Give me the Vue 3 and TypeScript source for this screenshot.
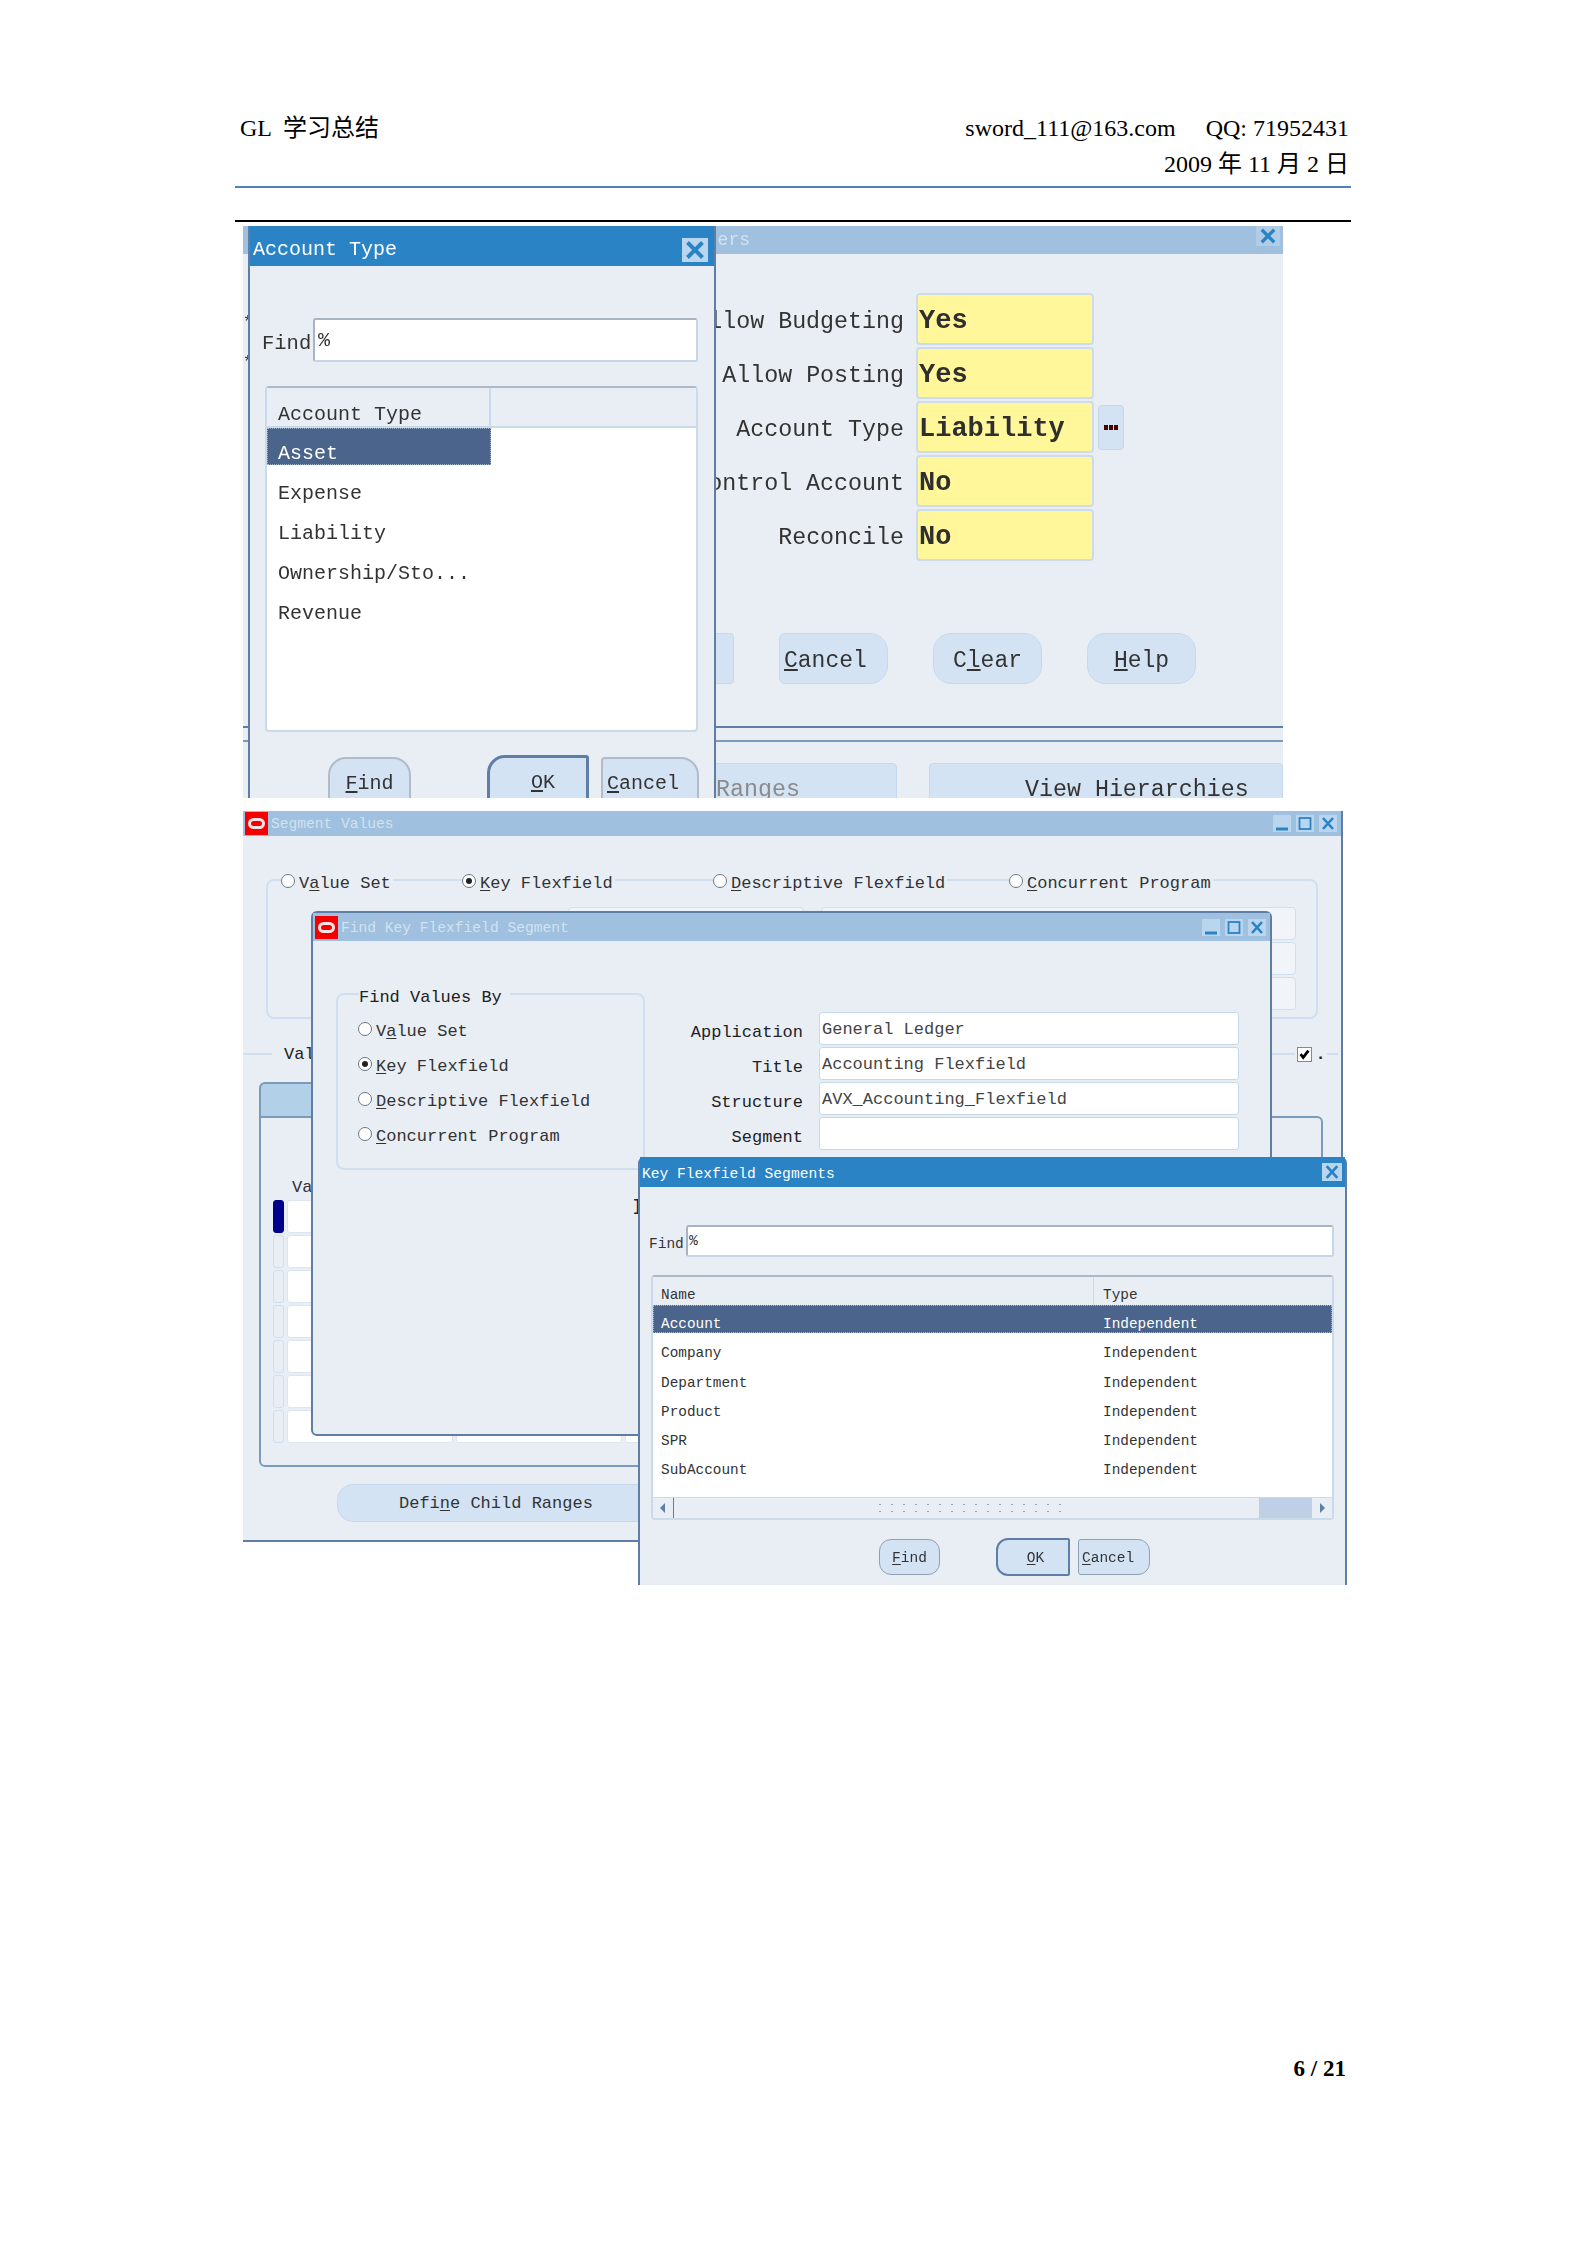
<script setup lang="ts">
interface FormRow { label: string; value: string }
const yellowRows: FormRow[] = [
  { label: 'Allow Budgeting', value: 'Yes' },
  { label: 'Allow Posting', value: 'Yes' },
  { label: 'Account Type', value: 'Liability' },
  { label: 'Control Account', value: 'No' },
  { label: 'Reconcile', value: 'No' },
]
const accountTypes: string[] = ['Asset', 'Expense', 'Liability', 'Ownership/Sto...', 'Revenue']
const findRadios = [
  { pre: 'V', mn: 'a', post: 'lue Set', on: false },
  { pre: '', mn: 'K', post: 'ey Flexfield', on: true },
  { pre: '', mn: 'D', post: 'escriptive Flexfield', on: false },
  { pre: '', mn: 'C', post: 'oncurrent Program', on: false },
]
const findFields: FormRow[] = [
  { label: 'Application', value: 'General Ledger' },
  { label: 'Title', value: 'Accounting Flexfield' },
  { label: 'Structure', value: 'AVX_Accounting_Flexfield' },
  { label: 'Segment', value: '' },
]
const segments: string[] = ['Account', 'Company', 'Department', 'Product', 'SPR', 'SubAccount']
const tableRows: number[] = [0, 1, 2, 3, 4, 5, 6]
const fieldRows: number[] = [0, 1, 2]
</script>

<template>
  <div class="page">
    <header class="head">
      <div class="head-left">GL 学习总结</div>
      <div class="head-right">
        <div>sword_111@163.com &nbsp;&nbsp;&nbsp; QQ: 71952431</div>
        <div>2009 年 11 月 2 日</div>
      </div>
    </header>
    <div class="rule-blue"></div>
    <div class="rule-black"></div>

    <section class="fig fig-a">
      <div class="back">
        <div class="bar bar-back">
          <span class="bar-title back-title">Parameters</span>
          <span class="wbtn back-close"><svg viewBox="0 0 16 16"><path d="M3 3l10 10M13 3L3 13" /></svg></span>
        </div>
        <div class="yellow-form">
          <div v-for="r in yellowRows" :key="r.label" class="yrow">
            <span class="ylabel">{{ r.label }}</span>
            <span class="yfield">{{ r.value }}</span>
            <span v-if="r.value === 'Liability'" class="more"><i></i><i></i><i></i></span>
          </div>
        </div>
        <div class="back-btns">
          <span class="bbtn stub"></span>
          <span class="bbtn left"><u>C</u>ancel</span>
          <span class="bbtn round">C<u>l</u>ear</span>
          <span class="bbtn round"><u>H</u>elp</span>
        </div>
        <div class="line-a"></div>
        <div class="line-b"></div>
        <div class="tab-btns">
          <span class="tab ranges">Ranges</span>
          <span class="tab view">View Hierarchies</span>
        </div>
      </div>
      <span class="edge-mark em1">*</span>
      <span class="edge-mark em2">*</span>

      <div class="dlg dlg-a">
        <div class="bar bar-front bar-a">
          <span class="bar-title a-title">Account Type</span>
          <span class="wbtn a-close"><svg viewBox="0 0 16 16"><path d="M3 3l10 10M13 3L3 13" /></svg></span>
        </div>
        <div class="a-find">
          <span class="a-find-label">Find</span>
          <span class="a-find-input">%</span>
        </div>
        <div class="a-list">
          <div class="a-head"><span class="a-head-cell">Account Type</span></div>
          <div class="a-rows">
            <div v-for="(t, i) in accountTypes" :key="t" class="a-row" :class="{ sel: i === 0 }">{{ t }}</div>
          </div>
        </div>
        <div class="a-btns">
          <span class="abtn a-b1"><u>F</u>ind</span>
          <span class="abtn a-b2"><u>O</u>K</span>
          <span class="abtn a-b3"><u>C</u>ancel</span>
        </div>
      </div>
    </section>

    <section class="fig fig-b">
      <div class="seg">
        <div class="bar bar-back seg-bar">
          <span class="logo"><i></i></span>
          <span class="bar-title small-title">Segment Values</span>
          <span class="wbtns">
            <span class="wbtn mini"><svg viewBox="0 0 18 17"><path d="M3 14h12" class="thick" /></svg></span>
            <span class="wbtn mini"><svg viewBox="0 0 18 17"><rect x="3.5" y="3" width="11" height="11" /></svg></span>
            <span class="wbtn mini"><svg viewBox="0 0 18 17"><path d="M4 3l10 11M14 3L4 14" /></svg></span>
          </span>
        </div>
        <div class="seg-frame">
          <div class="legend">
            <label v-for="o in findRadios" :key="o.post" class="radio legend-radio">
              <span class="dot" :class="{ on: o.on }"></span>
              <span>{{ o.pre }}<u>{{ o.mn }}</u>{{ o.post }}</span>
            </label>
          </div>
          <div class="seg-fields">
            <div class="seg-col seg-col-l"><span v-for="n in fieldRows" :key="n" class="seg-cell"></span></div>
            <div class="seg-col seg-col-r"><span v-for="n in fieldRows" :key="n" class="seg-cell"></span></div>
          </div>
        </div>
        <div class="val-row">
          <span class="val-line short"></span>
          <span class="val-text">Values</span>
          <span class="val-line grow"></span>
          <span class="check"><svg viewBox="0 0 15 15"><path d="M3 7l3 4 6-8" /></svg></span>
          <span class="val-dot">.</span>
          <span class="val-line end"></span>
        </div>
        <div class="panel-tab"></div>
        <div class="panel">
          <div class="panel-label">Value</div>
          <div v-for="n in tableRows" :key="n" class="t-row">
            <span class="t-ind" :class="{ cur: n === 0 }"></span>
            <span class="t-cell"></span>
            <span class="t-cell"></span>
            <span class="t-cell wide"></span>
          </div>
        </div>
        <div class="child-btn">Defi<u>n</u>e Child Ranges</div>
      </div>

      <div class="findwin">
        <div class="bar bar-back find-bar">
          <span class="logo"><i></i></span>
          <span class="bar-title small-title find-title">Find Key Flexfield Segment</span>
          <span class="wbtns">
            <span class="wbtn mini"><svg viewBox="0 0 18 17"><path d="M3 14h12" class="thick" /></svg></span>
            <span class="wbtn mini"><svg viewBox="0 0 18 17"><rect x="3.5" y="3" width="11" height="11" /></svg></span>
            <span class="wbtn mini"><svg viewBox="0 0 18 17"><path d="M4 3l10 11M14 3L4 14" /></svg></span>
          </span>
        </div>
        <div class="find-body">
          <div class="group">
            <div class="group-title">Find Values By</div>
            <label v-for="o in findRadios" :key="o.post" class="radio group-radio">
              <span class="dot" :class="{ on: o.on }"></span>
              <span>{{ o.pre }}<u>{{ o.mn }}</u>{{ o.post }}</span>
            </label>
          </div>
          <div class="find-form">
            <div v-for="f in findFields" :key="f.label" class="ff-row">
              <span class="ff-label">{{ f.label }}</span>
              <span class="ff-field">{{ f.value }}</span>
            </div>
          </div>
        </div>
        <span class="stray">]</span>
      </div>

      <div class="dlg dlg-k">
        <div class="bar bar-front bar-k">
          <span class="bar-title small-title white">Key Flexfield Segments</span>
          <span class="wbtn k-close"><svg viewBox="0 0 18 17"><path d="M4 3l10 11M14 3L4 14" /></svg></span>
        </div>
        <div class="k-find">
          <span class="k-find-label">Find</span>
          <span class="k-find-input">%</span>
        </div>
        <div class="k-list">
          <div class="k-head">
            <span class="k-c1 k-h1">Name</span>
            <span class="k-c2">Type</span>
          </div>
          <div v-for="(s, i) in segments" :key="s" class="k-row" :class="{ sel: i === 0 }">
            <span class="k-c1">{{ s }}</span>
            <span class="k-c2">Independent</span>
          </div>
          <div class="k-scroll">
            <span class="sb-arrow"><svg viewBox="0 0 8 14"><path d="M6 2v10L1 7z" /></svg></span>
            <span class="sb-track"><span class="sb-grip"></span></span>
            <span class="sb-rest"></span>
            <span class="sb-arrow right"><svg viewBox="0 0 8 14"><path d="M2 2v10l5-5z" /></svg></span>
          </div>
        </div>
        <div class="k-btns">
          <span class="kbtn k-b1"><u>F</u>ind</span>
          <span class="kbtn k-b2"><u>O</u>K</span>
          <span class="kbtn k-b3"><u>C</u>ancel</span>
        </div>
      </div>
    </section>

    <footer class="foot">6 / 21</footer>
  </div>
</template>

<style>
html, body { margin: 0; background: #fff; }
</style>

<style scoped>
.page {
  width: 1586px;
  height: 2244px;
  box-sizing: border-box;
  padding-top: 110px;
  overflow: hidden;
  background: #fff;
  color: #000;
  font-family: "Liberation Serif", "Noto Sans CJK SC", serif;
  font-size: 24px;
}
.head {
  display: flex;
  justify-content: space-between;
  margin: 0 237px 0 240px;
  line-height: 36px;
  height: 72px;
}
.head-left { word-spacing: 6px; }
.head-right { text-align: right; }
.rule-blue { margin: 4px 235px 0; height: 2px; background: #4f81bd; }
.rule-black { margin: 32px 235px 0; height: 2px; background: #000; }

.fig {
  position: relative;
  overflow: hidden;
  font-family: "Liberation Mono", "DejaVu Sans Mono", monospace;
  color: #333;
  filter: blur(0.35px);
}
.fig-a { margin: 4px 0 0 243px; width: 1040px; height: 572px; }
.fig-b { margin: 13px 0 0 243px; width: 1108px; height: 774px; }

u { text-underline-offset: 2px; }

.bar { display: flex; align-items: center; box-sizing: border-box; }
.bar-back { background: #9fc0de; }
.bar-front { background: #2a83c5; }
.bar-title { white-space: nowrap; }
.wbtn { display: flex; background: #b9d6ee; flex: none; }
.wbtn svg { width: 100%; height: 100%; fill: none; stroke: #2a83c5; stroke-width: 2.6; }
.wbtn rect { stroke-width: 1.8; }
.wbtn .thick { stroke-width: 3; }

/* figure A, window behind */
.back { width: 1040px; height: 572px; background: #e9eef5; }
.bar-back.bar { height: 28px; }
.back-title { margin-left: 399px; font-size: 18px; color: #d3e2f0; }
.back-close { margin-left: auto; margin-right: 3px; margin-top: -8px; width: 24px; height: 20px; background: #b1cde6; }
.yellow-form { padding-top: 39px; display: flex; flex-direction: column; gap: 2px; }
.yrow { display: flex; align-items: center; height: 52px; }
.ylabel { width: 661px; height: 52px; text-align: right; font-size: 23.3px; line-height: 58px; white-space: nowrap; }
.yfield {
  margin-left: 12px;
  width: 178px;
  height: 52px;
  box-sizing: border-box;
  padding-left: 1px;
  background: #fff79a;
  border: 2px solid #cddcec;
  border-radius: 4px;
  font-size: 27px;
  line-height: 53px;
  font-weight: 700;
  color: #2f2f2f;
}
.more {
  margin-left: 4px;
  width: 26px;
  height: 45px;
  box-sizing: border-box;
  background: #d3e3f3;
  border: 1px solid #c3d6ea;
  border-radius: 4px;
  display: flex;
  align-items: center;
  justify-content: center;
  gap: 1.5px;
}
.more i { width: 3.5px; height: 5px; background: #4a0000; }
.back-btns { display: flex; gap: 45px; margin-top: 72px; padding-left: 440px; }
.bbtn {
  width: 109px;
  height: 51px;
  box-sizing: border-box;
  background: #d3e3f3;
  border: 1px solid #c6d9ec;
  border-radius: 6px 18px 18px 6px;
  font-size: 23px;
  line-height: 55px;
  text-align: center;
}
.bbtn.left { text-align: left; padding-left: 4px; }
.bbtn.round { border-radius: 18px; }
.stub { width: 51px; border-radius: 4px; }
.line-a { margin-top: 42px; height: 2px; background: #5f7ea6; }
.line-b { margin-top: 12px; height: 2px; background: #7c9abc; }
.tab-btns { display: flex; margin-top: 21px; padding-left: 280px; gap: 32px; }
.tab {
  height: 50px;
  box-sizing: border-box;
  background: #d3e3f3;
  border: 1px solid #c6d9ec;
  border-radius: 4px 4px 0 0;
  font-size: 23.3px;
  line-height: 52px;
  white-space: nowrap;
}
.ranges { width: 374px; padding-left: 192px; color: #8a8a8a; }
.view { width: 354px; padding-left: 95px; }
.edge-mark { position: absolute; left: 0; font-size: 16px; line-height: 14px; color: #333; }
.em1 { top: 90px; }
.em2 { top: 130px; }

/* figure A, dialog */
.dlg { position: absolute; box-sizing: border-box; background: #e9eef5; border-left: 2px solid #5f7ea6; border-right: 2px solid #5f7ea6; }
.dlg-a { left: 5px; top: 0; width: 468px; height: 572px; }
.bar-a { height: 40px; }
.a-title { margin-left: 3px; margin-top: 7px; font-size: 20px; color: #fff; }
.a-close { margin-left: auto; margin-right: 6px; margin-top: 8px; width: 26px; height: 24px; }
.a-find { display: flex; padding: 52px 0 0 12px; height: 44px; }
.a-find-label { width: 51px; font-size: 20.5px; line-height: 52px; }
.a-find-input {
  width: 385px;
  box-sizing: border-box;
  background: #fff;
  border: 2px solid #c6d6e8;
  border-top-color: #a9b4c2;
  border-left-color: #a9b4c2;
  border-radius: 3px;
  padding-left: 3px;
  font-size: 20px;
  line-height: 41px;
}
.a-list {
  margin: 24px 0 0 15px;
  width: 433px;
  height: 346px;
  box-sizing: border-box;
  background: #fff;
  border: 2px solid #cbdaea;
  border-top-color: #aeb9c7;
  border-radius: 4px;
}
.a-head { height: 40px; background: #e9eef5; border-bottom: 2px solid #cbdaea; box-sizing: border-box; }
.a-head-cell {
  display: block;
  width: 224px;
  height: 38px;
  box-sizing: border-box;
  padding: 14px 0 0 11px;
  border-right: 2px solid #cbdaea;
  font-size: 20px;
  line-height: 26px;
}
.a-row {
  width: 224px;
  height: 37px;
  margin-bottom: 3px;
  box-sizing: border-box;
  padding: 9px 0 0 11px;
  font-size: 20px;
  line-height: 34px;
  white-space: nowrap;
}
.sel { background: #4a648b; color: #fff; outline: 1px dotted #9fb3cc; outline-offset: -1px; }
.a-btns { display: flex; align-items: flex-start; padding-left: 78px; margin-top: 25px; }
.abtn {
  height: 50px;
  box-sizing: border-box;
  background: #d3e3f3;
  border: 2px solid #b2bcc8;
  font-size: 20px;
  line-height: 50px;
  text-align: center;
}
.a-b1 { width: 83px; border-radius: 18px 18px 0 0; }
.a-b2 { width: 102px; margin: -2px 0 0 76px; height: 52px; padding-left: 10px; border-color: #5f7ea6; border-width: 3px; border-radius: 18px 3px 0 0; }
.a-b3 { width: 98px; margin-left: 12px; padding-left: 4px; text-align: left; border-radius: 4px 18px 0 0; }

/* figure B, segment values */
.seg {
  position: absolute;
  left: 0;
  top: 0;
  width: 1100px;
  height: 731px;
  box-sizing: border-box;
  background: #e9eef5;
  border-right: 2px solid #5f7ea6;
  border-bottom: 2px solid #5f7ea6;
}
.bar-back.seg-bar { height: 25px; padding-right: 4px; }
.logo {
  flex: none;
  width: 23px;
  height: 23px;
  background: #f40000;
  display: flex;
  align-items: center;
  justify-content: center;
  margin-left: 2px;
}
.logo i { width: 17px; height: 11px; box-sizing: border-box; border: 3px solid #f6e3e3; border-radius: 6px; }
.small-title { margin-left: 3px; font-size: 14.6px; color: #d3e2f0; }
.find-title { margin-top: 2px; }
.small-title.white { color: #fff; margin-left: 2px; margin-top: 3px; }
.wbtns { margin-left: auto; display: flex; gap: 5px; }
.mini { width: 18px; height: 17px; }
.seg-frame {
  margin: 43px 0 0 23px;
  width: 1052px;
  height: 140px;
  box-sizing: border-box;
  border: 2px solid #cfdfef;
  border-radius: 8px;
}
.legend {
  display: grid;
  grid-template-columns: 181px 251px 296px auto;
  margin: -8px 0 0 13px;
  height: 20px;
}
.radio { display: flex; align-items: center; font-size: 17px; white-space: nowrap; }
.legend-radio { justify-self: start; background: #e9eef5; padding-right: 2px; }
.dot {
  flex: none;
  box-sizing: border-box;
  width: 14px;
  height: 14px;
  margin: -5px 4px 0 0;
  border-radius: 50%;
  background: #fff;
  border: 1px solid #6b7684;
  display: flex;
  align-items: center;
  justify-content: center;
}
.dot.on::after { content: ""; width: 6px; height: 6px; border-radius: 50%; background: #222; }
.seg-fields { display: flex; gap: 17px; margin: 14px 0 0 300px; }
.seg-col { display: flex; flex-direction: column; gap: 2px; }
.seg-col-l { width: 236px; }
.seg-col-r { width: 475px; }
.seg-cell { height: 33px; box-sizing: border-box; background: #f1f5fa; border: 1px solid #cfdfef; border-radius: 4px; }
.val-row { display: flex; align-items: center; margin-top: 25px; height: 20px; }
.val-line { height: 2px; background: #cfdfef; }
.val-line.short { width: 29px; }
.val-line.grow { flex: 1; }
.val-line.end { width: 11px; margin-right: 3px; }
.val-text { margin: 0 5px 0 12px; font-size: 17px; color: #222; }
.check { flex: none; width: 15px; height: 15px; margin: 0 2px; box-sizing: border-box; background: #fff; border: 1px solid #888; display: flex; }
.check svg { width: 100%; height: 100%; fill: none; stroke: #000; stroke-width: 3.2; }
.val-dot { width: 13px; font-size: 17px; font-weight: 700; text-align: center; color: #222; }
.panel-tab {
  margin: 18px 0 0 16px;
  width: 500px;
  height: 34px;
  box-sizing: border-box;
  background: #b3d0e9;
  border-top: 2px solid #7c9abc;
  border-left: 2px solid #7c9abc;
  border-radius: 6px 0 0 0;
}
.panel {
  margin-left: 16px;
  width: 1064px;
  height: 351px;
  box-sizing: border-box;
  border: 2px solid #7c9abc;
  border-radius: 0 6px 6px 6px;
}
.panel-label { margin: 60px 0 0 31px; height: 22px; font-size: 17px; line-height: 20px; }
.t-row { display: flex; gap: 3px; padding-left: 12px; height: 33px; margin-bottom: 2px; }
.t-ind { width: 11px; box-sizing: border-box; background: #e9eef5; border: 1px solid #cfdfef; border-radius: 3px; }
.t-ind.cur { background: #00008b; border-color: #00008b; }
.t-cell { width: 166px; box-sizing: border-box; background: #fff; border: 1px solid #dbe6f2; border-radius: 3px; }
.t-cell.wide { width: 600px; }
.child-btn {
  margin: 17px 0 0 94px;
  width: 500px;
  height: 38px;
  box-sizing: border-box;
  padding-left: 61px;
  background: #d3e3f3;
  border: 1px solid #c6d9ec;
  border-radius: 16px 0 0 16px;
  font-size: 17px;
  line-height: 38px;
}

/* figure B, find window */
.findwin {
  position: absolute;
  left: 68px;
  top: 100px;
  width: 961px;
  height: 525px;
  box-sizing: border-box;
  background: #e9eef5;
  border: 2px solid #5f7ea6;
  border-radius: 6px 6px 0 6px;
}
.bar-back.find-bar { height: 28px; padding-right: 4px; }
.find-bar .logo { margin-left: 2px; }
.find-body { display: flex; padding: 52px 0 0 23px; }
.group {
  width: 309px;
  height: 177px;
  box-sizing: border-box;
  border: 2px solid #cfdfef;
  border-radius: 8px;
  padding-left: 20px;
}
.group-title {
  margin: -11px 0 0 1px;
  width: fit-content;
  padding: 0 8px 0 0;
  height: 20px;
  background: #e9eef5;
  font-size: 17px;
  line-height: 28px;
  color: #222;
}
.group-radio { height: 35px; }
.group-radio:first-of-type { margin-top: 10px; }
.find-form { margin: 19px 0 0 0; display: flex; flex-direction: column; gap: 2px; }
.ff-row { display: flex; height: 33px; }
.ff-label { width: 158px; text-align: right; font-size: 17px; line-height: 42px; color: #222; }
.ff-field {
  margin-left: 16px;
  width: 420px;
  box-sizing: border-box;
  background: #fff;
  border: 1px solid #c6d9ec;
  border-radius: 3px;
  padding-left: 2px;
  font-size: 17px;
  line-height: 33px;
  color: #444;
}
.stray { position: absolute; left: 319px; top: 284px; font-size: 17px; line-height: 20px; font-weight: 700; color: #222; }

/* figure B, key flexfield dialog */
.dlg-k { left: 395px; top: 346px; width: 709px; height: 428px; border-radius: 6px 6px 0 0; }
.bar-k { height: 30px; padding-right: 1px; }
.k-close { margin-left: auto; margin-right: 2px; width: 20px; height: 18px; }
.k-find { display: flex; height: 32px; padding: 38px 0 0 9px; }
.k-find-label { width: 37px; font-size: 14.5px; line-height: 39px; }
.k-find-input {
  width: 648px;
  height: 32px;
  box-sizing: border-box;
  background: #fff;
  border: 2px solid #c6d6e8;
  border-top-color: #a9b4c2;
  border-left-color: #a9b4c2;
  border-radius: 3px;
  padding-left: 1px;
  font-size: 14.5px;
  line-height: 29px;
}
.k-list {
  margin: 18px 0 0 11px;
  width: 683px;
  height: 245px;
  box-sizing: border-box;
  background: #fff;
  border: 2px solid #cbdaea;
  border-top-color: #aeb9c7;
  border-radius: 4px;
  display: flex;
  flex-direction: column;
}
.k-head { display: flex; height: 28px; flex: none; background: #e9eef5; font-size: 14.4px; line-height: 36px; }
.k-h1 { border-right: 1px solid #cbdaea; }
.k-c1 { width: 441px; box-sizing: border-box; padding-left: 8px; }
.k-c2 { padding-left: 9px; }
.k-row {
  display: flex;
  flex: none;
  height: 28px;
  margin-bottom: 1.3px;
  box-sizing: border-box;
  padding-top: 6px;
  font-size: 14.4px;
  line-height: 27px;
}
.k-row:first-of-type { margin-top: 2px; }
.k-scroll {
  margin-top: auto;
  display: flex;
  height: 20px;
  background: #e9eef5;
  border-top: 1px solid #cbdaea;
}
.sb-arrow { flex: none; width: 20px; display: flex; align-items: center; justify-content: center; border-right: 1px solid #5f7ea6; }
.sb-arrow.right { border-right: none; }
.sb-arrow svg { width: 8px; height: 14px; fill: #5f7ea6; }
.sb-track { width: 585px; display: flex; align-items: center; padding-left: 200px; box-sizing: border-box; }
.sb-grip {
  width: 191px;
  height: 14px;
  background-image: radial-gradient(circle, #8fa6c0 0.8px, transparent 1.1px);
  background-size: 12px 7px;
}
.sb-rest { flex: 1; background: #bdd0e6; }
.k-btns { display: flex; align-items: flex-start; padding-left: 239px; margin-top: 19px; }
.kbtn {
  height: 36px;
  box-sizing: border-box;
  background: #d3e3f3;
  border: 1px solid #8fa0b4;
  font-size: 14.5px;
  line-height: 37px;
  text-align: center;
}
.k-b1 { width: 61px; border-radius: 12px; }
.k-b2 { width: 74px; margin: -1px 0 0 56px; height: 38px; padding-left: 5px; border: 2px solid #5f7ea6; border-radius: 12px 2px 2px 12px; }
.k-b3 { width: 72px; margin-left: 8px; padding-left: 3px; text-align: left; border-radius: 3px 12px 12px 3px; }

.foot {
  margin: 470px 240px 0 0;
  text-align: right;
  font-weight: 700;
  font-size: 23px;
  line-height: 28px;
}
</style>
